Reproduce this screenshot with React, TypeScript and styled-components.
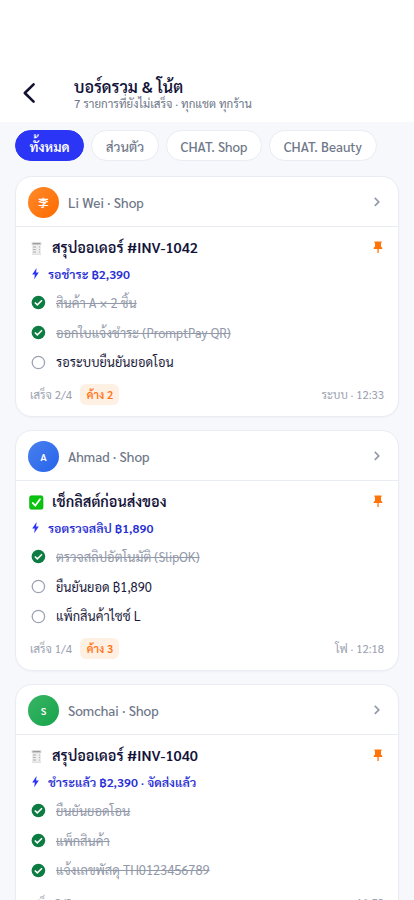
import React from "react";
import styled, { createGlobalStyle } from "styled-components";

const Global = createGlobalStyle`
  * { box-sizing: border-box; }
  html, body { margin: 0; height: 900px; overflow: hidden; background: #f6f8fb; }
  body, button { font-family: Sarabun, "Noto Sans", "Noto Sans CJK SC", sans-serif; }
`;

const Screen = styled.main`
  width: 414px;
  height: 900px;
  overflow: hidden;
  background: #f6f8fb;
  color: #14143a;
`;

const Header = styled.header`
  height: 122px;
  padding: 77px 0 0 20px;
  display: flex;
  background: #fff;
`;

const Back = styled.button`
  width: 18px;
  height: 32px;
  margin-right: 36px;
  padding: 0;
  border: 0;
  background: none;
  display: flex;
  align-items: center;
  justify-content: center;
  svg { flex: none; }
`;

const Heading = styled.h1`
  margin: 0;
  font-size: 16px;
  line-height: 20px;
  font-weight: 600;
  white-space: nowrap;
`;

const Subheading = styled.p`
  margin: 0;
  font-size: 11.6px;
  line-height: 14px;
  color: #6f7889;
  white-space: nowrap;
`;

const Chips = styled.nav`
  display: flex;
  gap: 7px;
  padding: 8px 15px 0;
`;

const Chip = styled.button<{ $active?: boolean; $width: number }>`
  flex: none;
  width: ${(p) => p.$width}px;
  height: 31px;
  padding: 2px 0 0;
  border-radius: 16px;
  border: 1px solid ${(p) => (p.$active ? "#2b35f5" : "#e9ecf2")};
  background: ${(p) => (p.$active ? "#2b35f5" : "#fff")};
  color: ${(p) => (p.$active ? "#fff" : "#6f7889")};
  font-size: 13.33px;
  font-weight: ${(p) => (p.$active ? 600 : 500)};
  line-height: 27px;
  white-space: nowrap;
`;

const Cards = styled.section`
  display: flex;
  flex-direction: column;
  gap: 13px;
  padding: 15px 15px 0;
`;

const Card = styled.article`
  height: 241px;
  flex: none;
  border: 1px solid #e9ecf2;
  border-radius: 17px;
  background: #fff;
  box-shadow: 0 1px 2px rgba(20, 20, 58, 0.03);
`;

const CardTop = styled.div`
  height: 50px;
  padding: 0 17px 0 12px;
  display: flex;
  align-items: center;
  border-bottom: 1px solid #e9ecf2;
`;

const Avatar = styled.div<{ $from: string; $to: string }>`
  width: 31px;
  height: 31px;
  margin: 1px 9px 0 0;
  border-radius: 50%;
  background: linear-gradient(135deg, ${(p) => p.$from}, ${(p) => p.$to});
  color: #fff;
  font-size: 10.3px;
  font-weight: 600;
  line-height: 32px;
  text-align: center;
`;

const Person = styled.span`
  flex: 1;
  padding-top: 3px;
  font-size: 13.5px;
  line-height: 20px;
  font-weight: 500;
  color: #6f7889;
`;

const Body = styled.div`
  padding: 8px 15px 0 13px;
`;

const TitleRow = styled.div`
  height: 25px;
  display: flex;
  align-items: center;
  svg { flex: none; }
`;

const Title = styled.h2`
  flex: 1;
  margin: 0 0 0 8px;
  font-size: 14.42px;
  line-height: 25px;
  font-weight: 600;
  white-space: nowrap;
`;

const Status = styled.div`
  height: 28px;
  padding: 0 0 0 2px;
  display: flex;
  align-items: center;
  gap: 8px;
  font-size: 12.4px;
  line-height: 20px;
  font-weight: 600;
  color: #2930d4;
`;

const Tasks = styled.ul`
  list-style: none;
  margin: 0;
  padding: 0;
`;

const Task = styled.li<{ $done: boolean }>`
  height: 29.8px;
  padding-left: 2px;
  display: flex;
  align-items: center;
  gap: 10px;
  font-size: 12.87px;
  line-height: 20px;
  color: ${(p) => (p.$done ? "#9299a9" : "#1c1c40")};
  white-space: nowrap;
  svg { flex: none; }
  span { text-decoration: ${(p) => (p.$done ? "line-through" : "none")}; }
`;

const Foot = styled.footer`
  height: 22px;
  margin: 6px -1px 0 1px;
  display: flex;
  align-items: center;
  justify-content: space-between;
  font-size: 11.37px;
  line-height: 18px;
  color: #9ba2b0;
`;

const Progress = styled.div`
  display: flex;
  align-items: center;
  gap: 8.5px;
`;

const Meta = styled.span`
  padding-top: 2px;
`;

const Badge = styled.span`
  width: 39px;
  height: 21px;
  border-radius: 6px;
  background: #fff0e4;
  color: #ff7416;
  font-size: 11px;
  font-weight: 600;
  line-height: 22px;
  text-align: center;
`;

const Receipt = () => (
  <svg width="15" height="16" viewBox="0 0 15 16">
    <path d="M3 3h9v11.6H3z" fill="#ededed" />
    <path d="M2.7 2.4h9.6v2.4H2.7z" fill="#c8c8c8" />
    <path d="M4 3.6h7" stroke="#8c8c8c" strokeWidth=".8" />
    <path d="M4 7h3M4 9.5h2.6M4 12h3M10 7h1M10 9.5h1M10 12h1" stroke="#9b9b9b" strokeWidth=".8" />
    <path d="M3 14.7l1-.6 1 .6 1-.6 1 .6 1-.6 1 .6 1-.6 1 .6 1-.6" stroke="#d0d0d0" strokeWidth=".6" fill="none" />
  </svg>
);

const CheckTile = () => (
  <svg width="15" height="16" viewBox="0 0 15 16">
    <rect x=".6" y="1.8" width="13.4" height="13.4" rx="1.7" fill="#0ac50e" stroke="#08a40c" strokeWidth=".6" />
    <path d="M3.7 8.8l2.6 2.8L11 5.2" fill="none" stroke="#fff" strokeWidth="1.7" strokeLinecap="round" />
  </svg>
);

const Bolt = () => (
  <svg width="9" height="12" viewBox="0 0 9 12">
    <path d="M5.6 0L1.2 6.6h2.6L3.2 11.2 7.8 4.6H5.1z" fill="#2b35f5" />
  </svg>
);

const Pin = () => (
  <svg width="10" height="13" viewBox="0 0 10 13">
    <path d="M1.4.6h7.2v1.2H8v4l1.3 1v1.3H5.7v4H4.4v-4H.7V6.8l1.3-1v-4h-.6z" fill="#ff7408" />
  </svg>
);

const Chevron = () => (
  <svg width="8" height="11" viewBox="0 0 8 11">
    <path d="M1.8 1.9l4 4-4 4" fill="none" stroke="#9298a9" strokeWidth="1.6" />
  </svg>
);

const Mark = ({ done }: { done: boolean }) => (
  <svg width="15" height="15" viewBox="0 0 15 15">
    {done ? (
      <>
        <circle cx="7.4" cy="7.5" r="6.8" fill="#0d7c42" />
        <path d="M3.8 7.5l2.5 2.4L11 5.2" fill="none" stroke="#fff" strokeWidth="1.5" />
      </>
    ) : (
      <circle cx="7.4" cy="7.5" r="6.2" fill="#fff" stroke="#9ca3b5" strokeWidth="1.3" />
    )}
  </svg>
);

type Item = { text: string; done: boolean };
type Note = {
  initial: string;
  from: string;
  to: string;
  name: string;
  receipt?: boolean;
  title: string;
  status: string;
  items: Item[];
  progress: string;
  left?: string;
  time: string;
};

const notes: Note[] = [
  {
    initial: "李", from: "#ff8a2a", to: "#ff6a00", name: "Li Wei · Shop", receipt: true,
    title: "สรุปออเดอร์ #INV-1042", status: "รอชำระ ฿2,390",
    items: [
      { text: "สินค้า A × 2 ชิ้น", done: true },
      { text: "ออกใบแจ้งชำระ (PromptPay QR)", done: true },
      { text: "รอระบบยืนยันยอดโอน", done: false },
    ],
    progress: "เสร็จ 2/4", left: "ค้าง 2", time: "ระบบ · 12:33",
  },
  {
    initial: "A", from: "#4a80ee", to: "#2563eb", name: "Ahmad · Shop",
    title: "เช็กลิสต์ก่อนส่งของ", status: "รอตรวจสลิป ฿1,890",
    items: [
      { text: "ตรวจสลิปอัตโนมัติ (SlipOK)", done: true },
      { text: "ยืนยันยอด ฿1,890", done: false },
      { text: "แพ็กสินค้าไซซ์ L", done: false },
    ],
    progress: "เสร็จ 1/4", left: "ค้าง 3", time: "โฟ · 12:18",
  },
  {
    initial: "S", from: "#38b565", to: "#16a34a", name: "Somchai · Shop", receipt: true,
    title: "สรุปออเดอร์ #INV-1040", status: "ชำระแล้ว ฿2,390 · จัดส่งแล้ว",
    items: [
      { text: "ยืนยันยอดโอน", done: true },
      { text: "แพ็กสินค้า", done: true },
      { text: "แจ้งเลขพัสดุ TH0123456789", done: true },
    ],
    progress: "เสร็จ 3/3", time: "ระบบ · 11:52",
  },
];

export default function App() {
  return (
    <Screen>
      <Global />
      <Header>
        <Back aria-label="ย้อนกลับ">
          <svg width="14" height="22" viewBox="0 0 14 22">
            <path d="M11.6 2.4L2.8 11l8.8 8.6" fill="none" stroke="#111133" strokeWidth="2.6" strokeLinecap="round" strokeLinejoin="round" />
          </svg>
        </Back>
        <div>
          <Heading>บอร์ดรวม &amp; โน้ต</Heading>
          <Subheading>7 รายการที่ยังไม่เสร็จ · ทุกแชต ทุกร้าน</Subheading>
        </div>
      </Header>
      <Chips>
        <Chip $active $width={69}>ทั้งหมด</Chip>
        <Chip $width={68}>ส่วนตัว</Chip>
        <Chip $width={96}>CHAT. Shop</Chip>
        <Chip $width={107.5}>CHAT. Beauty</Chip>
      </Chips>
      <Cards>
        {notes.map((n) => (
          <Card key={n.name}>
            <CardTop>
              <Avatar $from={n.from} $to={n.to}>{n.initial}</Avatar>
              <Person>{n.name}</Person>
              <Chevron />
            </CardTop>
            <Body>
              <TitleRow>
                {n.receipt ? <Receipt /> : <CheckTile />}
                <Title>{n.title}</Title>
                <Pin />
              </TitleRow>
              <Status><Bolt /><span>{n.status}</span></Status>
              <Tasks>
                {n.items.map((i) => (
                  <Task key={i.text} $done={i.done}>
                    <Mark done={i.done} /><span>{i.text}</span>
                  </Task>
                ))}
              </Tasks>
              <Foot>
                <Progress>
                  <Meta>{n.progress}</Meta>
                  {n.left && <Badge>{n.left}</Badge>}
                </Progress>
                <Meta>{n.time}</Meta>
              </Foot>
            </Body>
          </Card>
        ))}
      </Cards>
    </Screen>
  );
}
